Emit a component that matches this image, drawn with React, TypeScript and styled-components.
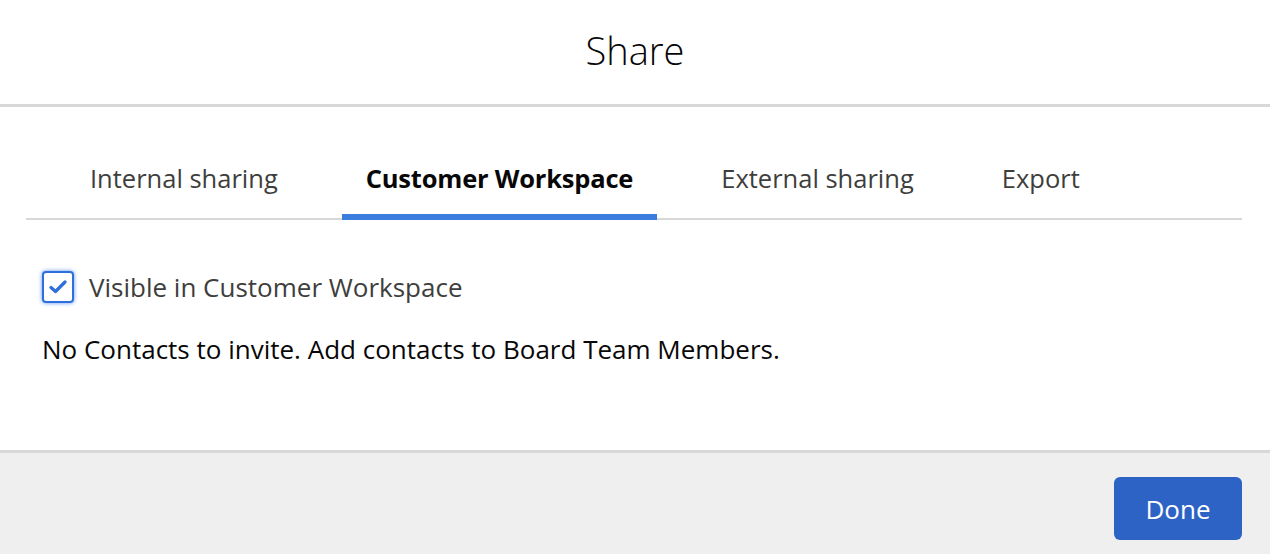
import React, { useState } from 'react';
import styled, { createGlobalStyle } from 'styled-components';

const GlobalStyle = createGlobalStyle`
  html, body {
    margin: 0;
    padding: 0;
    background: #ffffff;
    font-family: "Open Sans", "Noto Sans", Arial, sans-serif;
  }
`;

const Modal = styled.div`
  width: 1270px;
  height: 554px;
  display: flex;
  flex-direction: column;
  background: #fff;
`;

const Header = styled.header`
  height: 107px;
  display: flex;
  align-items: center;
  justify-content: center;
  border-bottom: 3px solid #d8d8d8;
  box-sizing: border-box;
`;

const Title = styled.h2`
  margin: 0;
  font-size: 38px;
  font-weight: 300;
  color: #080707;
  padding-bottom: 4px;
`;

const Body = styled.div`
  flex: 1;
  padding: 0 28px 0 26px;
`;

const TabList = styled.div`
  display: flex;
  gap: 40px;
  padding-left: 40px;
  margin-top: 49px;
  border-bottom: 2px solid #d8d8d8;
`;

const Tab = styled.button<{ $active?: boolean }>`
  position: relative;
  background: none;
  border: none;
  padding: 0 24px 18px;
  height: 62px;
  font-family: inherit;
  font-size: 25.5px;
  font-weight: ${p => (p.$active ? 700 : 400)};
  letter-spacing: ${p => (p.$active ? '-0.2px' : '0')};
  color: ${p => (p.$active ? '#080707' : '#3e3e3c')};
  cursor: pointer;
  &::after {
    content: '';
    position: absolute;
    left: 0;
    right: 0;
    bottom: -2px;
    height: 6px;
    background: ${p => (p.$active ? '#3b7ddd' : 'transparent')};
  }
`;

const Panel = styled.div`
  padding: 0 0 0 16px;
`;

const CheckRow = styled.label`
  display: flex;
  align-items: center;
  gap: 15px;
  margin-top: 49px;
  font-size: 26px;
  color: #3e3e3c;
  cursor: pointer;
`;

const Box = styled.span`
  width: 32px;
  height: 32px;
  box-sizing: border-box;
  border: 2px solid #2f6fdb;
  border-radius: 4px;
  box-shadow: 0 0 4px #5d95f0;
  display: flex;
  align-items: center;
  justify-content: center;
  background: #fff;
`;

const Note = styled.p`
  margin: 26px 0 0 0;
  font-size: 26px;
  color: #080707;
`;

const Footer = styled.footer`
  height: 104px;
  box-sizing: border-box;
  border-top: 3px solid #d8d8d8;
  background: #efefef;
  display: flex;
  justify-content: flex-end;
  align-items: center;
  padding: 0 28px 0 0;
`;

const DoneButton = styled.button`
  width: 128px;
  height: 63px;
  margin-top: 10px;
  border: none;
  border-radius: 6px;
  background: #2e63c6;
  color: #fff;
  font-family: inherit;
  font-size: 26px;
  cursor: pointer;
`;

const tabs = ['Internal sharing', 'Customer Workspace', 'External sharing', 'Export'];

const App: React.FC = () => {
  const [active, setActive] = useState(1);
  const [checked, setChecked] = useState(true);

  return (
    <Modal>
      <GlobalStyle />
      <Header>
        <Title>Share</Title>
      </Header>
      <Body>
        <TabList>
          {tabs.map((t, i) => (
            <Tab key={t} $active={i === active} onClick={() => setActive(i)}>
              {t}
            </Tab>
          ))}
        </TabList>
        <Panel>
          <CheckRow onClick={() => setChecked(!checked)}>
            <Box>
              {checked && (
                <svg width="18" height="14" viewBox="0 0 18 14">
                  <path d="M2 7.5 L6.5 11.5 L16 2" fill="none" stroke="#2f6fdb" strokeWidth="3.2" strokeLinecap="round" strokeLinejoin="round" />
                </svg>
              )}
            </Box>
            Visible in Customer Workspace
          </CheckRow>
          <Note>No Contacts to invite. Add contacts to Board Team Members.</Note>
        </Panel>
      </Body>
      <Footer>
        <DoneButton>Done</DoneButton>
      </Footer>
    </Modal>
  );
};

export default App;
